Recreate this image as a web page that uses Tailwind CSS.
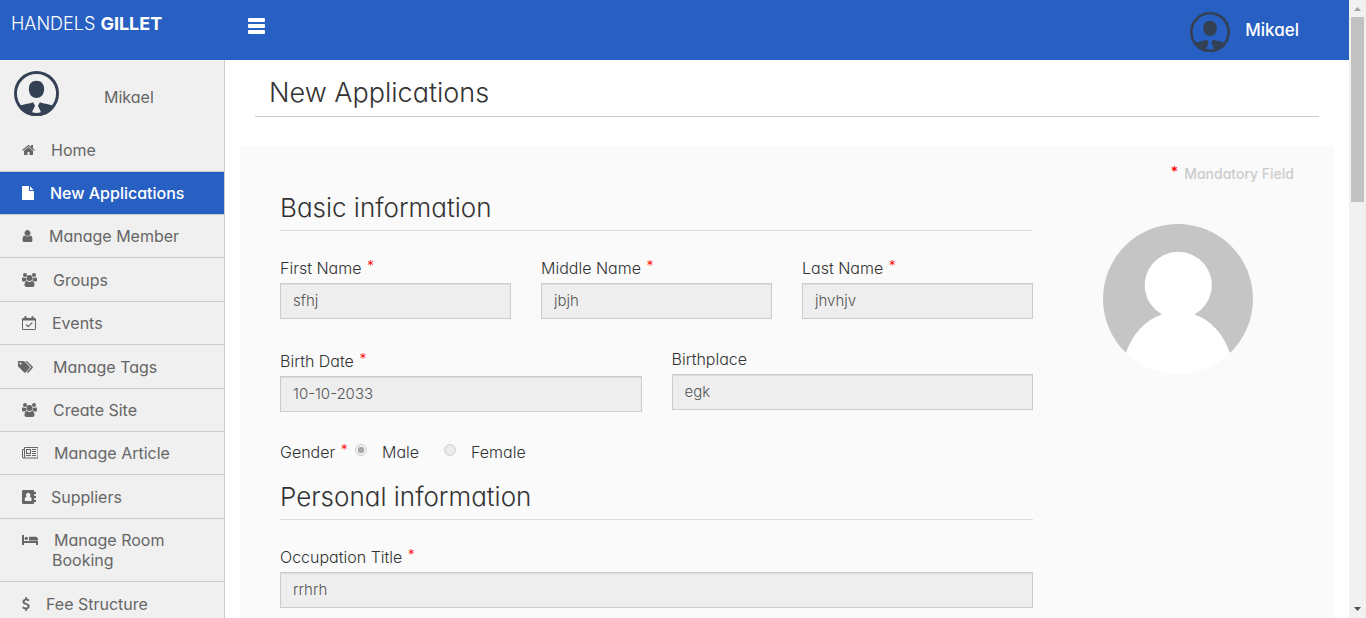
<!DOCTYPE html>
<html lang="en">
<head>
<meta charset="utf-8">
<meta name="viewport" content="width=device-width, initial-scale=1">
<title>New Applications</title>
<script src="https://cdn.jsdelivr.net/npm/@tailwindcss/browser@4"></script>
</head>
<body class="flex h-screen overflow-hidden bg-white font-['Inter','Liberation_Sans',sans-serif] text-base text-[#333] [font-feature-settings:'cv11']">

<svg class="hidden" aria-hidden="true">
  <symbol id="member" viewBox="0 0 46 46">
    <circle cx="23" cy="23" r="21.500" fill="none" stroke="#344154" stroke-width="3"/>
    <path fill="#344154" d="M23 10c5 0 7.800 3.300 7.800 8.300 0 5.300-3.100 9.200-7.800 9.200s-7.800-3.900-7.800-9.200c0-5 2.800-8.300 7.800-8.300zM19.500 32l2 3.500-3 6.500 2.500 4C13 45.500 8 41.500 4.500 36.500c3.500-2.500 9.500-2.500 15-4.500zM26.500 32l-2 3.500 3 6.500-2.500 4c8-.5 13-4.500 16.500-9.500-3.500-2.500-9.500-2.500-15-4.500z"/>
  </symbol>
</svg>

<div class="flex min-w-0 flex-1 flex-col">
  <header class="flex h-15 shrink-0 items-start bg-[#285fc2] text-white">
    <a href="#" class="w-[248px] pt-[10px] pl-[11px] text-lg leading-7 font-light">HANDELS <b class="font-bold">GILLET</b></a>
    <button type="button" aria-label="Toggle menu" class="mt-[18px] flex w-[17px] flex-col gap-[2px]">
      <span class="h-1 w-full rounded-[1px] bg-white"></span>
      <span class="h-1 w-full rounded-[1px] bg-white"></span>
      <span class="h-1 w-full rounded-[1px] bg-white"></span>
    </button>
    <a href="#" class="mt-3 mr-[50px] ml-auto flex gap-[15px] text-[17px] font-medium">
      <svg class="size-10" aria-hidden="true"><use href="#member"/></svg>
      <span class="leading-9">Mikael</span>
    </a>
  </header>

  <div class="flex min-h-0 flex-1">
    <aside class="w-[225px] shrink-0 overflow-hidden border-r border-[#ccc] bg-[#f0f0f0] text-base leading-5 text-[#666]">
      <div class="flex h-[68px] items-start gap-[45px] pt-[11px] pl-[14px]">
        <svg class="size-[45px]" aria-hidden="true"><use href="#member"/></svg>
        <span class="pt-4">Mikael</span>
      </div>
      <nav>
        <ul>
          <li class="h-11 border-b border-[#ccc]"><a href="#" class="flex h-full items-center gap-4 pl-[22px]">
            <svg class="h-[14px] w-[13px]" viewBox="64 0 1664 1792" fill="currentColor" aria-hidden="true"><path d="M1472 992v480q0 26-19 45t-45 19h-384v-384h-256v384h-384q-26 0-45-19t-19-45v-480q0-1 .5-3t.5-3l575-474 575 474q1 2 1 6zm223-69l-62 74q-8 9-21 11h-3q-13 0-21-7l-692-577-692 577q-12 8-24 7-13-2-21-11l-62-74q-8-10-7-23.500t11-21.500l719-599q32-26 76-26t76 26l244 204v-195q0-14 9-23t23-9h192q14 0 23 9t9 23v408l219 182q10 8 11 21.500t-7 23.500z"/></svg>
            Home</a></li>
          <li class="h-[43px] border-b border-[#ccc] bg-[#285fc2] text-white"><a href="#" aria-current="page" class="flex h-full items-center gap-4 pl-[22px] font-medium">
            <svg class="h-[14px] w-3" viewBox="128 0 1536 1792" preserveAspectRatio="none" fill="currentColor" aria-hidden="true"><path d="M1152 512v-472q22 14 36 28l408 408q14 14 28 36h-472zm-128 32q0 40 28 68t68 28h544v1056q0 40-28 68t-68 28h-1344q-40 0-68-28t-28-68v-1600q0-40 28-68t68-28h800v544z"/></svg>
            New Applications</a></li>
          <li class="h-[43px] border-b border-[#ccc]"><a href="#" class="flex h-full items-center gap-4 pl-[22px]">
            <svg class="h-[14px] w-[11px]" viewBox="192 0 1408 1792" fill="currentColor" aria-hidden="true"><path d="M1536 1399q0 109-62.500 187t-150.500 78h-854q-88 0-150.500-78t-62.500-187q0-85 8.500-160.500t31.500-152 58.500-131 94-89 134.500-34.500q131 128 313 128t313-128q76 0 134.500 34.500t94 89 58.500 131 31.500 152 8.500 160.500zm-256-887q0 159-112.500 271.500t-271.500 112.500-271.500-112.500-112.500-271.500 112.500-271.500 271.500-112.500 271.500 112.500 112.500 271.500z"/></svg>
            Manage Member</a></li>
          <li class="h-11 border-b border-[#ccc]"><a href="#" class="flex h-full items-center gap-4 pl-[22px]">
            <svg class="h-[14px] w-[15px]" viewBox="0 0 15 14" fill="currentColor" aria-hidden="true"><circle cx="3" cy="2" r="2"/><circle cx="12" cy="2" r="2"/><circle cx="7.500" cy="5" r="3"/><path d="M1 4.200l2 .7 1-.2c0 1.200.3 2 .9 2.800-.8 0-1.600.4-2.200 1H1.500C.6 8.500 0 8 0 7.200 0 5.500.2 4.200 1 4.200zM14 4.200l-2 .7-1-.2c0 1.200-.3 2-.9 2.800.8 0 1.600.4 2.200 1h1.200c.9 0 1.500-.5 1.500-1.300 0-1.700-.2-3-1-3zM5.200 8c.7.600 1.400.9 2.300.9s1.600-.3 2.300-.9c2 0 2.700 1.800 2.700 4 0 1.300-.8 2-2 2h-6c-1.200 0-2-.7-2-2 0-2.200.7-4 2.700-4z"/></svg>
            Groups</a></li>
          <li class="h-[43px] border-b border-[#ccc]"><a href="#" class="flex h-full items-center gap-4 pl-[22px]">
            <svg class="size-[14px]" viewBox="0 0 14 14" fill="none" stroke="currentColor" aria-hidden="true"><rect x=".5" y="2.500" width="13" height="11" rx=".5"/><path d="M.5 3.500h13" stroke-width="2"/><path d="M3.500.2v3M10.500.2v3" stroke-width="2.200"/><path d="M4 8.500L6.200 10.700 10.300 6.600" stroke-width="1.200"/></svg>
            Events</a></li>
          <li class="h-11 border-b border-[#ccc]"><a href="#" class="flex h-full items-center gap-5 pl-[18px]">
            <svg class="h-[14px] w-[15px]" viewBox="0 0 15 14" fill="currentColor" aria-hidden="true"><path fill-rule="evenodd" d="M0 2c0-.6.400-1 1-1h4c.6 0 1.300.3 1.700.7l4.900 4.900c.4.400.4 1 0 1.400l-4 4.500c-.4.400-1 .4-1.400 0L.7 7C.3 6.600 0 5.900 0 5.300zM2.500 2.400a1.100 1.100 0 100 2.200 1.100 1.100 0 000-2.200z"/><path d="M7 1h1c.6 0 1.200.3 1.700.7l4.900 4.900c.4.400.4 1 0 1.400l-4 4.500c-.4.400-1 .4-1.400 0l-.4-.4 3.900-4.300c.4-.4.400-1 0-1.400z"/></svg>
            Manage Tags</a></li>
          <li class="h-[43px] border-b border-[#ccc]"><a href="#" class="flex h-full items-center gap-4 pl-[22px]">
            <svg class="h-[14px] w-[15px]" viewBox="0 0 15 14" fill="currentColor" aria-hidden="true"><circle cx="3" cy="2" r="2"/><circle cx="12" cy="2" r="2"/><circle cx="7.500" cy="5" r="3"/><path d="M1 4.200l2 .7 1-.2c0 1.200.3 2 .9 2.800-.8 0-1.600.4-2.200 1H1.500C.6 8.500 0 8 0 7.200 0 5.500.2 4.200 1 4.200zM14 4.200l-2 .7-1-.2c0 1.200-.3 2-.9 2.800.8 0 1.600.4 2.200 1h1.200c.9 0 1.500-.5 1.500-1.300 0-1.700-.2-3-1-3zM5.200 8c.7.600 1.400.9 2.300.9s1.600-.3 2.300-.9c2 0 2.700 1.800 2.700 4 0 1.300-.8 2-2 2h-6c-1.200 0-2-.7-2-2 0-2.200.7-4 2.700-4z"/></svg>
            Create Site</a></li>
          <li class="h-[43px] border-b border-[#ccc]"><a href="#" class="flex h-full items-center gap-4 pl-[22px]">
            <svg class="h-[14px] w-4" viewBox="0 0 16 14" fill="none" stroke="currentColor" aria-hidden="true"><path d="M2.500 1.500h13.500v10.500h-14.500c-.6 0-1-.4-1-1V3.500h2M2.500 1.500V11c0 .6-.4 1-1 1"/><rect x="4.500" y="3.500" width="4" height="4"/><path d="M10 3.500h4M10 5.500h4M10 7.500h4M4 9.500h5M10 9.500h4"/></svg>
            Manage Article</a></li>
          <li class="h-11 border-b border-[#ccc]"><a href="#" class="flex h-full items-center gap-[15px] pl-[22px]">
            <svg class="size-[14px]" viewBox="0 0 14 14" fill="currentColor" aria-hidden="true"><rect width="12.200" height="14" rx="1.200"/><path d="M12 2h2v2h-2zM12 6h2v2h-2zM12 10h2v2h-2z"/><path fill="#f0f0f0" d="M6.200 2.800a2.300 2.300 0 011.500 4c1.400.1 2 1.500 2 3.200 0 .5-.3.900-.9.900H3.600c-.6 0-.9-.4-.9-.9 0-1.700.6-3.100 2-3.200a2.300 2.300 0 011.500-4z"/></svg>
            Suppliers</a></li>
          <li class="border-b border-[#ccc]"><a href="#" class="flex items-start gap-[14px] py-[11px] pl-[22px]">
            <svg class="mt-[3px] h-[14px] w-4 shrink-0" viewBox="0 0 16 14" fill="currentColor" aria-hidden="true"><path d="M0 2h2v6h14v4h-2v-2H2v2H0zM16 7.500H7V3.700h6.500c1.500 0 2.500 1 2.500 2.500z"/><circle cx="4.300" cy="5.400" r="1.700"/></svg>
            <span class="block w-[130px] indent-[2px]">Manage Room Booking</span></a></li>
          <li class="h-[43px]"><a href="#" class="flex h-full items-center gap-4 pl-[22px]">
            <svg class="h-[14px] w-2" viewBox="384 0 1024 1792" fill="currentColor" aria-hidden="true"><path d="M1362 1185q0 153-99.500 263.500t-258.500 136.500v175q0 14-9 23t-23 9h-135q-13 0-22.500-9.500t-9.500-22.500v-175q-66-9-127.500-31t-101.500-44.500-74-48-46.500-37.500-17.500-18q-17-21-2-41l103-135q7-10 23-12 15-2 24 9l2 2q113 99 243 125 37 8 74 8 81 0 142.500-43t61.500-122q0-28-15-53t-33.500-42-58.500-37.500-66-32-80-32.500q-39-16-61.500-25t-61.500-26.500-62.500-31-56.500-35.500-53.500-42.500-43.500-49-35.500-58-21-66.500-8.500-78q0-138 98-242t255-134v-180q0-13 9.500-22.500t22.500-9.500h135q14 0 23 9t9 23v176q57 6 110.500 23t87 33.500 63.500 37.500 39 29 15 14q17 18 5 38l-81 146q-8 15-23 16-14 3-27-7-3-3-14.500-12t-39-26.500-58.500-32-74.500-26-85.500-11.500q-95 0-155 43t-60 111q0 26 8.500 48t29.500 41.500 39.500 33 56 31 60.500 27 70 27.500q53 20 81 31.500t76 35 75.500 42.500 62 50 53 63.500 31.500 76.500 13 94z"/></svg>
            Fee Structure</a></li>
        </ul>
      </nav>
    </aside>

    <main class="min-w-0 flex-1 overflow-hidden px-[15px]">
      <h1 class="mx-[15px] h-[57px] border-b border-[#ccc] pt-[15px] pl-[14px] text-[27px] leading-9 font-light">New Applications</h1>

      <form class="mt-[30px] bg-[#fafafa] px-10 pt-[17px] pb-10">
        <p class="flex h-5 justify-end gap-[6px] text-sm leading-5 font-medium text-[#ccc]"><span class="leading-4 text-[#f00]">*</span> Mandatory Field</p>
        <div class="flex gap-[30px]">
          <div class="min-w-0 flex-1">
            <h2 class="mb-6 h-[47px] border-b border-[#ddd] pt-[6px] text-[26px] leading-9 font-light">Basic information</h2>
            <div class="grid grid-cols-3 gap-[30px] text-[15px]">
              <div>
                <label for="first" class="block h-7 pt-[3px] text-base leading-5 font-[350]">First Name <span class="ml-px align-top text-sm leading-4 text-[#f00]">*</span></label>
                <input id="first" value="sfhj" disabled class="block h-9 w-full border border-[#ccc] bg-[#eee] px-3 pb-[2px] font-light text-[#555] shadow-[inset_0_1px_1px_rgba(0,0,0,0.075)]">
              </div>
              <div>
                <label for="middle" class="block h-7 pt-[3px] text-base leading-5 font-[350]">Middle Name <span class="ml-px align-top text-sm leading-4 text-[#f00]">*</span></label>
                <input id="middle" value="jbjh" disabled class="block h-9 w-full border border-[#ccc] bg-[#eee] px-3 pb-[2px] font-light text-[#555] shadow-[inset_0_1px_1px_rgba(0,0,0,0.075)]">
              </div>
              <div>
                <label for="last" class="block h-7 pt-[3px] text-base leading-5 font-[350]">Last Name <span class="ml-px align-top text-sm leading-4 text-[#f00]">*</span></label>
                <input id="last" value="jhvhjv" disabled class="block h-9 w-full border border-[#ccc] bg-[#eee] px-3 pb-[2px] font-light text-[#555] shadow-[inset_0_1px_1px_rgba(0,0,0,0.075)]">
              </div>
            </div>
            <div class="mt-[29px] grid grid-cols-2 gap-[30px] text-[15px]">
              <div>
                <label for="birth" class="block h-7 pt-[3px] text-base leading-5 font-[350]">Birth Date <span class="ml-px align-top text-sm leading-4 text-[#f00]">*</span></label>
                <input id="birth" value="10-10-2033" disabled class="block h-9 w-full border border-[#ccc] bg-[#eee] px-3 pb-[2px] font-light text-[#555] shadow-[inset_0_1px_1px_rgba(0,0,0,0.075)]">
              </div>
              <div>
                <label for="place" class="block h-[26px] pt-px text-base leading-5 font-[350]">Birthplace</label>
                <input id="place" value="egk" disabled class="block h-9 w-full border border-[#ccc] bg-[#eee] px-3 pb-[2px] font-light text-[#555] shadow-[inset_0_1px_1px_rgba(0,0,0,0.075)]">
              </div>
            </div>
            <fieldset class="mt-[30px] flex h-5 items-center text-base leading-5 font-[350]">
              <legend class="float-left w-[75px]">Gender <span class="ml-px align-top text-sm leading-4 text-[#f00]">*</span></legend>
              <label class="flex w-[89px] items-center gap-[15px]"><input type="radio" name="gender" checked disabled class="mb-1 size-3 appearance-none rounded-full border border-[#d0d0d0] bg-[radial-gradient(circle,#a8a8a8_3px,#efefef_3px)]">Male</label>
              <label class="flex items-center gap-[15px]"><input type="radio" name="gender" disabled class="mb-1 size-3 appearance-none rounded-full border border-[#d0d0d0] bg-[#ebebeb]">Female</label>
            </fieldset>
            <h2 class="mt-[11px] mb-6 h-[47px] border-b border-[#ddd] pt-[6px] text-[26px] leading-9 font-light">Personal information</h2>
            <div class="text-[15px]">
              <label for="title" class="block h-7 pt-[3px] text-base leading-5 font-[350]">Occupation Title <span class="ml-px align-top text-sm leading-4 text-[#f00]">*</span></label>
              <input id="title" value="rrhrh" disabled class="block h-9 w-full border border-[#ccc] bg-[#eee] px-3 pb-[2px] font-light text-[#555] shadow-[inset_0_1px_1px_rgba(0,0,0,0.075)]">
            </div>
          </div>
          <div class="flex w-[231px] shrink-0 justify-center pt-10 pr-[1px]">
            <svg class="size-[150px]" viewBox="0 0 150 150" role="img" aria-label="Profile photo"><circle cx="75" cy="75" r="75" fill="#fff"/><path fill="#c5c5c5" d="M23 129A75 75 0 11127 129C121 111 108 96 91.500 90.500A33.500 33.500 0 10 59 90.500C42 96 29 111 23 129z"/></svg>
          </div>
        </div>
      </form>
    </main>
  </div>
</div>

<!-- Page scroll track -->
<div class="flex w-[17px] shrink-0 flex-col items-center bg-[#f1f1f1]" aria-hidden="true">
  <svg class="h-[17px] w-[17px] shrink-0" viewBox="0 0 17 17" fill="#a3a3a3"><path d="M5 11h7L8.500 7z"/></svg>
  <div class="h-[30%] w-[13px] bg-[#c1c1c1]"></div>
  <svg class="mt-auto h-[17px] w-[17px] shrink-0" viewBox="0 0 17 17" fill="#505050"><path d="M5 6h7l-3.500 4z"/></svg>
</div>
</body>
</html>
